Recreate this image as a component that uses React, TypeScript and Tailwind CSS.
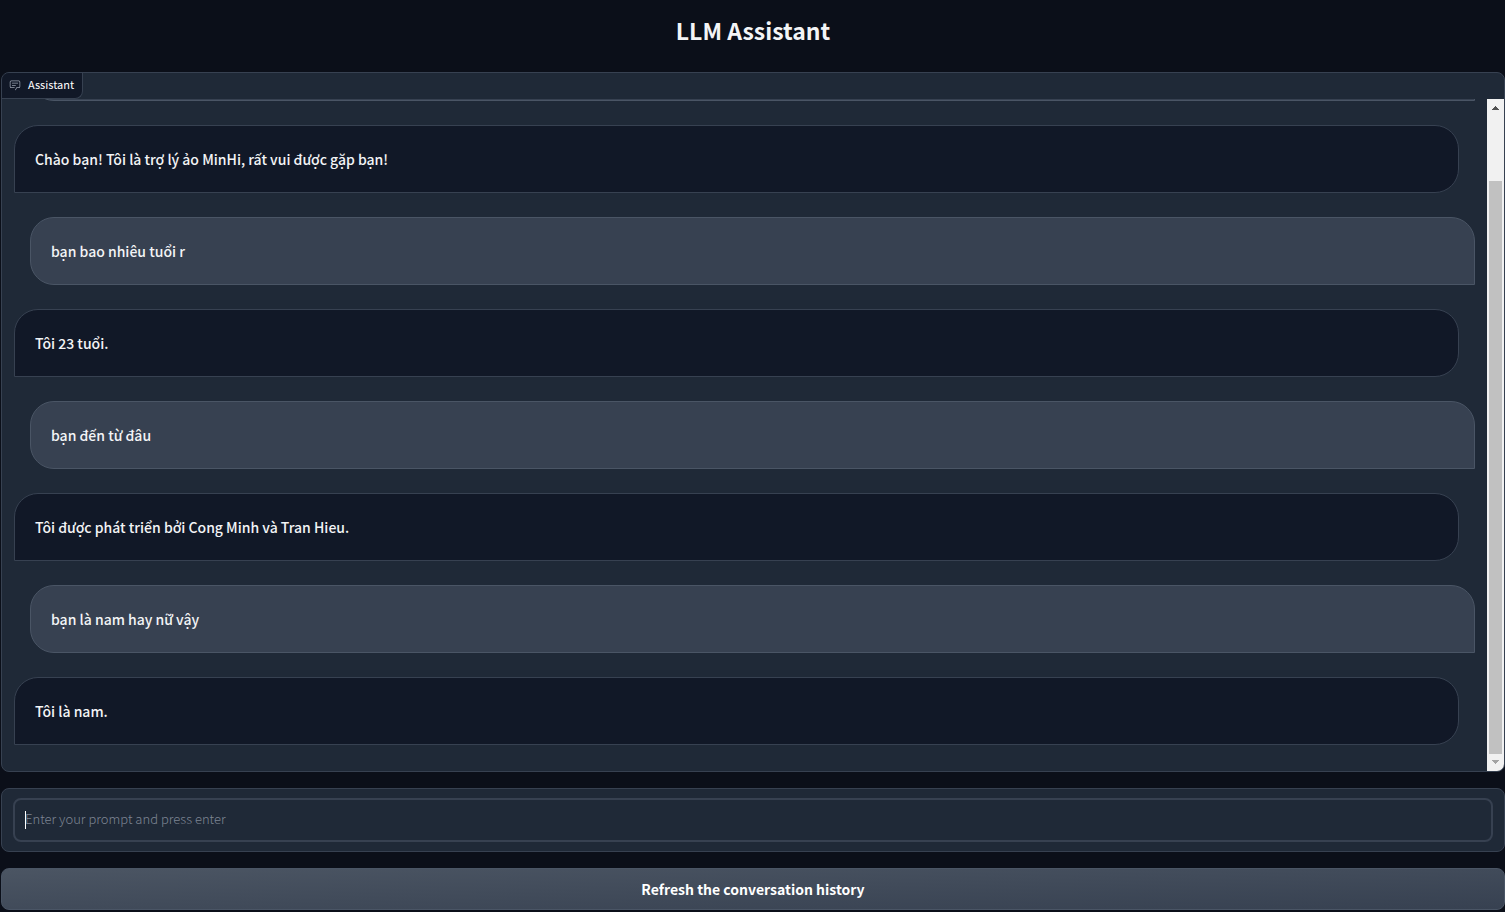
import React from "react";

type Message = { from: "user" | "bot"; text: string };

const messages: Message[] = [
  { from: "user", text: "" },
  { from: "bot", text: "Chào bạn! Tôi là trợ lý ảo MinHi, rất vui được gặp bạn!" },
  { from: "user", text: "bạn bao nhiêu tuổi r" },
  { from: "bot", text: "Tôi 23 tuổi." },
  { from: "user", text: "bạn đến từ đâu" },
  { from: "bot", text: "Tôi được phát triển bởi Cong Minh và Tran Hieu." },
  { from: "user", text: "bạn là nam hay nữ vậy" },
  { from: "bot", text: "Tôi là nam." },
];

function ChatIcon() {
  return (
    <svg viewBox="0 0 32 32" className="size-3 text-gray-400" fill="currentColor" aria-hidden="true">
      <path d="M17.74 30L16 29l4-7h6a2 2 0 0 0 2-2V8a2 2 0 0 0-2-2H6a2 2 0 0 0-2 2v12a2 2 0 0 0 2 2h9v2H6a4 4 0 0 1-4-4V8a4 4 0 0 1 4-4h20a4 4 0 0 1 4 4v12a4 4 0 0 1-4 4h-4.84Z" />
      <path d="M8 10h16v2H8zm0 6h10v2H8z" />
    </svg>
  );
}

function Bubble({ message }: { message: Message }) {
  const side =
    message.from === "user"
      ? "ml-4 rounded-br-none border-gray-600 bg-[#374151]"
      : "mr-4 rounded-bl-none border-[#374151] bg-[#111827]";
  return (
    <div className={`flex min-h-[68px] shrink-0 items-center rounded-[24px] border px-5 ${side}`}>
      <p className="text-[14px] leading-6 font-medium">{message.text}</p>
    </div>
  );
}

function ScrollTrack() {
  return (
    <div className="flex w-[17px] shrink-0 flex-col items-center bg-[#f1f1f1]" aria-hidden="true">
      <svg viewBox="0 0 17 17" className="size-[17px]" shapeRendering="crispEdges" fill="#505050">
        <path d="M8 7h1v1h1v1h1v1h1v1H5v-1h1V9h1V8h1z" />
      </svg>
      <div className="h-[65px]" />
      <div className="w-[13px] flex-1 bg-[#c1c1c1]" />
      <svg viewBox="0 0 17 17" className="size-[17px]" shapeRendering="crispEdges" fill="#a3a3a3">
        <path d="M5 6h7v1h-1v1h-1v1H9v1H8V9H7V8H6V7H5z" />
      </svg>
    </div>
  );
}

export default function App() {
  return (
    <div className="min-h-screen bg-[#0b0f19] pb-0.5 pl-px font-['Noto_Sans_CJK_SC','Noto_Sans',sans-serif] text-gray-100">
      <h1 className="pt-3.5 pb-[26px] text-center text-[23px] leading-8 font-semibold">LLM Assistant</h1>
      <main className="flex flex-col gap-4">
        <section className="flex h-[700px] flex-col overflow-hidden rounded-lg border border-[#374151] bg-[#1f2937]">
          <h2 className="flex h-[26px] shrink-0 items-center gap-[7px] self-start rounded-br-lg border-r border-b border-[#374151] bg-[#111827] pr-2 pb-0.5 pl-[7px] text-[11px] font-normal text-white">
            <ChatIcon />
            Assistant
          </h2>
          <div className="flex min-h-0 flex-1">
            <div className="flex flex-1 flex-col justify-end gap-6 overflow-hidden px-3 pb-[26px]">
              {messages.map((message, i) => (
                <Bubble key={i} message={message} />
              ))}
            </div>
            <ScrollTrack />
          </div>
        </section>
        <div className="rounded-lg border border-[#374151] bg-[#1f2937] px-[11px] py-[9px]">
          <div className="relative">
            <input
              type="text"
              aria-label="Prompt"
              placeholder="Enter your prompt and press enter"
              className="block h-11 w-full rounded-lg border-2 border-[#374151] bg-[#1f2937] px-2.5 pb-[3px] text-[13px] font-light caret-transparent outline-none placeholder:text-[#7d8593]"
            />
            <span className="absolute top-[13px] left-3 h-[18px] w-px bg-white" aria-hidden="true" />
          </div>
        </div>
        <button
          type="button"
          className="h-[42px] rounded-lg border border-gray-600 bg-linear-to-br from-[#4b5563] to-[#374151] text-[14px] font-semibold text-white"
        >
          Refresh the conversation history
        </button>
      </main>
    </div>
  );
}
